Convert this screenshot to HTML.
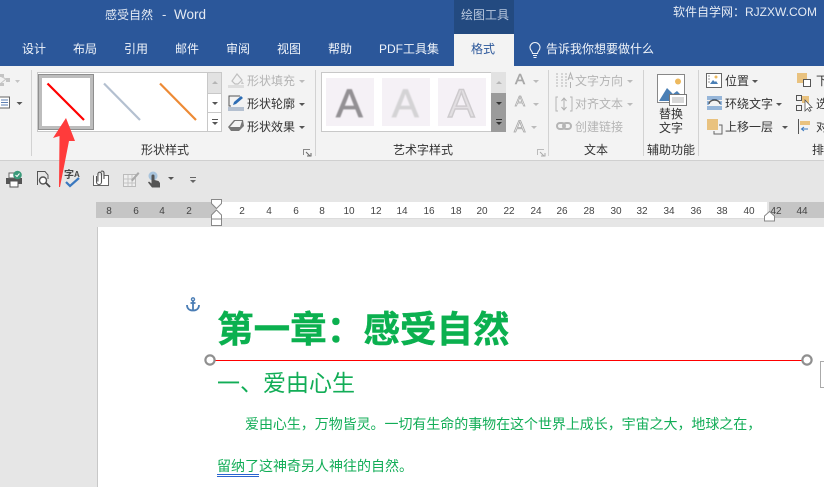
<!DOCTYPE html>
<html><head><meta charset="utf-8">
<style>
html,body{margin:0;padding:0;}
body{width:824px;height:487px;overflow:hidden;position:relative;background:#e6e6e6;font-family:"Liberation Sans","Noto Sans CJK SC",sans-serif;}
.t{position:absolute;white-space:nowrap;line-height:1;}
.r{position:absolute;}
.tab{color:#f0f4fa;font-size:12px;top:43px;}
.lb{color:#333;font-size:12px;}
.dis{color:#b4b4b4;font-size:12px;}
.rul{position:absolute;top:207px;font-size:10px;color:#444;line-height:1;width:20px;text-align:center;font-family:"Liberation Sans",sans-serif;}
.sep{position:absolute;top:70px;width:1px;height:86px;background:#d2d2d2;}
.ar{position:absolute;width:0;height:0;border-left:3px solid transparent;border-right:3px solid transparent;border-top:3px solid #555;}
svg{position:absolute;overflow:visible;}
</style></head><body>

<!-- title bar -->
<div class="r" style="left:0;top:0;width:824px;height:66px;background:#2b579a"></div>
<div class="r" style="left:454px;top:0;width:60px;height:34px;background:#234a80"></div>
<div class="r" style="left:454px;top:34px;width:60px;height:32px;background:#f3f3f3"></div>
<div class="t" style="left:105px;top:9px;font-size:12px;color:#e4eaf3">感受自然</div>
<div class="t" style="left:162px;top:8px;font-size:13px;color:#e4eaf3">-</div>
<div class="t" style="left:174px;top:8px;font-size:13.5px;color:#e4eaf3">Word</div>
<div class="t" style="left:461px;top:9px;font-size:12px;color:#b9c8de">绘图工具</div>
<div class="t" style="left:673px;top:6px;font-size:12px;color:#e4eaf3">软件自学网：RJZXW.COM</div>

<div class="t tab" style="left:22px">设计</div>
<div class="t tab" style="left:73px">布局</div>
<div class="t tab" style="left:124px">引用</div>
<div class="t tab" style="left:175px">邮件</div>
<div class="t tab" style="left:226px">审阅</div>
<div class="t tab" style="left:277px">视图</div>
<div class="t tab" style="left:328px">帮助</div>
<div class="t tab" style="left:379px">PDF工具集</div>
<div class="t tab" style="left:471px;color:#2b579a">格式</div>
<svg style="left:528px;top:42px" width="14" height="17" viewBox="0 0 14 17"><path d="M4.500 11.500C4.500 9 2 8.500 2 5.500a5 5 0 0 1 10 0C12 8.500 9.500 9 9.500 11.500ZM5 13.500h4M5.500 15.500h3" fill="none" stroke="#eef2f8" stroke-width="1.100"/></svg>
<div class="t tab" style="left:546px">告诉我你想要做什么</div>

<!-- ribbon -->
<div class="r" style="left:0;top:66px;width:824px;height:94px;background:#f3f3f3"></div>
<div class="r" style="left:0;top:160px;width:824px;height:1px;background:#d0d0d0"></div>
<div class="sep" style="left:31px"></div>
<div class="sep" style="left:315px"></div>
<div class="sep" style="left:548px"></div>
<div class="sep" style="left:643px"></div>
<div class="sep" style="left:698px"></div>

<!-- left cut icons -->
<svg style="left:0;top:72px" width="24" height="44" viewBox="0 0 24 44"><path d="M0 2h4v3H0zM6 6h4v4H6zM0 11h4v3H0z" fill="#c4c4c4"/><path d="M0 4L6 7L0 12" stroke="#c4c4c4" fill="none"/><path d="M15 8h5l-2.500 3z" fill="#c4c4c4"/><path d="M0 25h9.500v11H0" fill="#fff" stroke="#666"/><path d="M1 28h7M1 30.500h7M1 33h7" stroke="#2b579a" stroke-width=".8"/><path d="M16.500 30h6l-3 3z" fill="#555"/></svg>

<!-- shape styles gallery -->
<div class="r" style="left:37px;top:72px;width:185px;height:60px;background:#fff;border:1px solid #c8c8c8;box-sizing:border-box"></div>
<div class="r" style="left:38px;top:74px;width:56px;height:56px;border:4px solid #bdbdbd;outline:1px solid #8f8f8f;outline-offset:-1px;box-sizing:border-box;background:#fff"></div>
<svg style="left:38px;top:74px" width="190" height="56" viewBox="0 0 190 56"><line x1="9.500" y1="9.500" x2="46" y2="46" stroke="#f00" stroke-width="2.200"/><line x1="66" y1="9.500" x2="102" y2="46" stroke="#b4c0d0" stroke-width="2.200"/><line x1="122" y1="9.500" x2="158" y2="46" stroke="#ed8a35" stroke-width="2.200"/></svg>
<div class="r" style="left:207px;top:72px;width:15px;height:60px;background:#f3f3f3;border:1px solid #c8c8c8;box-sizing:border-box"></div>
<div class="r" style="left:208px;top:73px;width:13px;height:20px;background:#e2e2e2"></div>
<div class="r" style="left:208px;top:93px;width:13px;height:20px;background:#fff;border-bottom:1px solid #c8c8c8;border-top:1px solid #c8c8c8;box-sizing:border-box"></div>
<div class="r" style="left:208px;top:113px;width:13px;height:18px;background:#fff"></div>
<div class="ar" style="left:212px;top:81px;border-top:0;border-bottom:3px solid #b5b5b5"></div>
<div class="ar" style="left:212px;top:102px"></div>
<div class="r" style="left:212px;top:119px;width:6px;height:1px;background:#555"></div>
<div class="ar" style="left:212px;top:122px"></div>

<!-- shape fill etc -->
<svg style="left:228px;top:72px" width="20" height="18" viewBox="0 0 20 18"><path d="M4 9l5-7 5 6-4 4H7z" fill="none" stroke="#c0c0c0" stroke-width="1.200"/><path d="M14 9l2 3h-3z" fill="#c8c8c8"/><rect x="0" y="13" width="16" height="3" fill="#dedede"/></svg>
<div class="t dis" style="left:247px;top:75px">形状填充</div><div class="ar" style="left:299px;top:80px;border-top-color:#bbb"></div>
<svg style="left:228px;top:95px" width="18" height="16" viewBox="0 0 18 16"><path d="M12 1H1v10h2" fill="none" stroke="#555"/><path d="M5 10l1-3 7-6 2 2-7 6z" fill="#2e6db4"/><rect y="12" width="16" height="4" fill="#b4c0d0"/></svg>
<div class="t lb" style="left:247px;top:98px">形状轮廓</div><div class="ar" style="left:299px;top:103px"></div>
<svg style="left:228px;top:120px" width="18" height="12" viewBox="0 0 18 12"><path d="M0 7L6 0h9l1 6-5 5H3z" fill="#777"/><path d="M2 7l5-6h7l-2 6H7z" fill="#f4f4f4"/></svg>
<div class="t lb" style="left:247px;top:121px">形状效果</div><div class="ar" style="left:299px;top:126px"></div>
<div class="t lb" style="left:141px;top:144px">形状样式</div>
<svg style="left:303px;top:149px" width="9" height="8" viewBox="0 0 9 8"><path d="M.5 6V.5H7" fill="none" stroke="#888"/><path d="M3 3l4 4M4 7h4V4" fill="none" stroke="#666"/></svg>

<!-- wordart gallery -->
<div class="r" style="left:321px;top:72px;width:171px;height:60px;background:#fff;border:1px solid #c8c8c8;box-sizing:border-box"></div>
<div class="r" style="left:326px;top:78px;width:48px;height:48px;background:#f5f1f6"></div>
<div class="r" style="left:382px;top:78px;width:48px;height:48px;background:#f5f1f6"></div>
<div class="r" style="left:438px;top:78px;width:48px;height:48px;background:#f5f1f6"></div>
<div class="t" style="left:336px;top:84px;font-size:40px;color:#939094;-webkit-text-stroke:.8px #939094;filter:blur(.6px)">A</div>
<div class="t" style="left:392px;top:84px;font-size:40px;color:#d4d3d5;-webkit-text-stroke:.8px #d4d3d5;filter:blur(.6px)">A</div>
<div class="t" style="left:448px;top:84px;font-size:40px;color:#e2dfe2;-webkit-text-stroke:1.400px #cdcacd;filter:blur(.3px)">A</div>
<div class="r" style="left:491px;top:72px;width:15px;height:21px;background:#e2e2e2"></div>
<div class="r" style="left:491px;top:93px;width:15px;height:39px;background:#9b9b9b"></div>
<div class="ar" style="left:496px;top:81px;border-top:0;border-bottom:3px solid #b5b5b5"></div>
<div class="ar" style="left:496px;top:102px;border-top-color:#333"></div>
<div class="r" style="left:496px;top:119px;width:6px;height:1px;background:#333"></div>
<div class="ar" style="left:496px;top:122px;border-top-color:#333"></div>
<div class="t" style="left:515px;top:72px;font-size:15px;color:#a8a8a8;-webkit-text-stroke:.5px #a8a8a8">A</div><div class="ar" style="left:533px;top:80px;border-top-color:#bbb"></div>
<div class="t" style="left:515px;top:94px;font-size:15px;color:#f3f3f3;-webkit-text-stroke:.7px #a8a8a8">A</div><div class="ar" style="left:533px;top:103px;border-top-color:#bbb"></div>
<div class="t" style="left:514px;top:118px;font-size:17px;color:#efefef;-webkit-text-stroke:.8px #a8a8a8">A</div><div class="ar" style="left:531px;top:126px;border-top-color:#bbb"></div>
<div class="t lb" style="left:393px;top:144px">艺术字样式</div>
<svg style="left:537px;top:149px" width="9" height="8" viewBox="0 0 9 8"><path d="M.5 6V.5H7" fill="none" stroke="#bbb"/><path d="M3 3l4 4M4 7h4V4" fill="none" stroke="#aaa"/></svg>

<!-- text group -->
<svg style="left:555px;top:72px" width="20" height="18" viewBox="0 0 20 18"><path d="M2 1v15M7 1v15M11 1v15" stroke="#b5b5b5" stroke-dasharray="2 1"/><path d="M13 8l2.500-7 2.500 7M14 6h3M15.500 10v6" stroke="#b0b0b0" fill="none"/></svg>
<div class="t dis" style="left:575px;top:75px">文字方向</div><div class="ar" style="left:627px;top:80px;border-top-color:#bbb"></div>
<svg style="left:555px;top:96px" width="18" height="16" viewBox="0 0 18 16"><path d="M3 1H1v14h2M15 1h2v14h-2" fill="none" stroke="#b5b5b5"/><path d="M9 2v12M6.500 5L9 2l2.500 3M6.500 11L9 14l2.500-3" fill="none" stroke="#b0b0b0"/></svg>
<div class="t dis" style="left:575px;top:98px">对齐文本</div><div class="ar" style="left:627px;top:103px;border-top-color:#bbb"></div>
<svg style="left:556px;top:120px" width="16" height="12" viewBox="0 0 16 12"><rect x="1" y="3" width="8" height="6" rx="3" fill="none" stroke="#b5b5b5" stroke-width="2"/><rect x="7" y="3" width="8" height="6" rx="3" fill="none" stroke="#b5b5b5" stroke-width="2"/></svg>
<div class="t dis" style="left:575px;top:121px">创建链接</div>
<div class="t lb" style="left:584px;top:144px">文本</div>

<!-- alt text -->
<svg style="left:657px;top:74px" width="44" height="33" viewBox="0 0 44 33"><rect x=".5" y=".5" width="27" height="28" fill="#fff" stroke="#888"/><circle cx="21" cy="7.500" r="3" fill="#edb95e"/><path d="M2 27L10 14l6 6 4-3 6 6v4z" fill="#4a7fb5"/><rect x="12.500" y="20.500" width="17" height="11" fill="#fff" stroke="#777"/><path d="M15 24h12M15 26h12M15 28h12" stroke="#999" stroke-width=".8"/></svg>
<div class="t lb" style="left:659px;top:108px">替换</div>
<div class="t lb" style="left:659px;top:122px">文字</div>
<div class="t lb" style="left:647px;top:144px">辅助功能</div>

<!-- arrange -->
<svg style="left:706px;top:72px" width="17" height="17" viewBox="0 0 17 17"><rect x=".5" y="1.500" width="15" height="14" fill="#fff" stroke="#666"/><circle cx="10" cy="5" r="1.500" fill="#edb95e"/><path d="M4 12l3-4 2 2 1-1 2 3z" fill="#4a7fb5"/><path d="M2 4h2M2 7h2M2 10h2" stroke="#999"/></svg>
<div class="t lb" style="left:725px;top:75px">位置</div><div class="ar" style="left:752px;top:80px"></div>
<svg style="left:707px;top:96px" width="16" height="14" viewBox="0 0 16 14"><path d="M0 1h15M0 3h15M0 11h15M0 13h15" stroke="#3a78bf"/><path d="M2 8a5.500 4 0 0 1 11 0" stroke="#555" stroke-width="1.500" fill="none"/><path d="M0 6h2M13 6h2M0 8h2M13 8h2" stroke="#3a78bf"/></svg>
<div class="t lb" style="left:725px;top:98px">环绕文字</div><div class="ar" style="left:776px;top:103px"></div>
<svg style="left:707px;top:119px" width="16" height="16" viewBox="0 0 16 16"><rect width="11" height="11" fill="#e9c27f"/><path d="M12 6h3v9H7v-3" fill="none" stroke="#666"/></svg>
<div class="t lb" style="left:725px;top:121px">上移一层</div><div class="ar" style="left:782px;top:126px"></div>
<svg style="left:797px;top:73px" width="16" height="16" viewBox="0 0 16 16"><rect width="10" height="10" fill="#e9c27f"/><rect x="6.500" y="6.500" width="7" height="7" fill="#fff" stroke="#555"/></svg>
<div class="t lb" style="left:816px;top:75px">下</div>
<svg style="left:796px;top:95px" width="18" height="18" viewBox="0 0 18 18"><rect x=".5" y=".5" width="5" height="5" fill="none" stroke="#555"/><rect x=".5" y="10.500" width="5" height="5" fill="none" stroke="#555"/><rect x="6" y="1" width="7" height="7" fill="#e9c27f"/><path d="M9 5v11l2.500-2.500 2 3 1.500-1-2-3h3z" fill="#fff" stroke="#555" stroke-width=".8"/></svg>
<div class="t lb" style="left:816px;top:98px">选</div>
<svg style="left:798px;top:119px" width="14" height="15" viewBox="0 0 14 15"><path d="M.5 0v15" stroke="#555"/><rect x="2" y="2" width="10" height="4" fill="#e9c27f"/><path d="M10 10H4M6 8l-2.500 2L6 12" stroke="#3a78bf" fill="none"/></svg>
<div class="t lb" style="left:816px;top:121px">对</div>
<div class="t lb" style="left:812px;top:144px">排</div>

<!-- QAT icons -->
<svg style="left:5px;top:170px" width="18" height="18" viewBox="0 0 18 18"><path d="M1 8h16v6H1z" fill="#555"/><rect x="4" y="3" width="8" height="5" fill="#fff" stroke="#666"/><rect x="5" y="11" width="8" height="6" fill="#fff" stroke="#555"/><circle cx="12.500" cy="5" r="4.300" fill="#3a9a7a"/><path d="M10.500 5l1.500 1.500 2.500-3" stroke="#fff" fill="none"/></svg>
<svg style="left:36px;top:170px" width="17" height="18" viewBox="0 0 17 18"><path d="M1.500 15V1.500H9L12 5v4" fill="none" stroke="#555"/><circle cx="7" cy="10.500" r="3.500" fill="#fff" stroke="#555" stroke-width="1.400"/><path d="M10 13l4 4" stroke="#444" stroke-width="1.800"/></svg>
<div class="t" style="left:64px;top:171px;font-size:10px;color:#444;font-weight:bold">字</div>
<div class="t" style="left:74px;top:171px;font-size:8px;color:#444;font-weight:bold">A</div>
<svg style="left:65px;top:177px" width="16" height="11" viewBox="0 0 16 11"><path d="M1 5l4 4 9-8" fill="none" stroke="#3a78bf" stroke-width="2.200"/></svg>
<svg style="left:93px;top:170px" width="17" height="17" viewBox="0 0 17 17"><path d="M.5 5.500v10h15v-10h-4" fill="#fff" stroke="#666"/><path d="M3.500 6v6a2.500 2.500 0 0 0 5 0V4a1.800 1.800 0 0 0-3.600 0v7.500" fill="none" stroke="#555" stroke-width="1.100"/><path d="M8 1.500a1.800 1.800 0 0 1 3 1.500v6" fill="none" stroke="#555" stroke-width="1.100"/></svg>
<svg style="left:123px;top:171px" width="17" height="16" viewBox="0 0 17 16"><rect x=".5" y="3.500" width="12" height="12" fill="#eee" stroke="#bbb"/><path d="M1 8h11M1 12h11M5 4v11M9 4v11" stroke="#c4c4c4"/><path d="M8 9l7-8 1.500 1.500-7 8z" fill="#aaa"/></svg>
<svg style="left:148px;top:171px" width="14" height="17" viewBox="0 0 14 17"><circle cx="5" cy="5" r="4.500" fill="#a8c4dd"/><path d="M3.500 5a1.500 1.500 0 0 1 3 0v4l4 1 1.500 2v4.500H4l-4-5 1-1 2.500 2z" fill="#555"/></svg>
<div class="ar" style="left:168px;top:177px;border-top-color:#555"></div>
<div class="r" style="left:190px;top:177px;width:6px;height:1px;background:#666"></div>
<div class="ar" style="left:190px;top:180px;border-top-color:#666"></div>

<!-- ruler -->
<div class="r" style="left:96px;top:202px;width:120px;height:16px;background:#c5c5c5"></div>
<div class="r" style="left:216px;top:202px;width:551px;height:16px;background:#fff"></div>
<div class="r" style="left:769px;top:202px;width:55px;height:16px;background:#c5c5c5"></div>
<div class="r" style="left:216px;top:218px;width:551px;height:1px;background:#dcdcdc"></div>
<div class="rul" style="left:99px">8</div><div class="rul" style="left:126px">6</div><div class="rul" style="left:152px">4</div><div class="rul" style="left:179px">2</div>
<div class="rul" style="left:232px">2</div><div class="rul" style="left:259px">4</div><div class="rul" style="left:286px">6</div><div class="rul" style="left:312px">8</div>
<div class="rul" style="left:339px">10</div><div class="rul" style="left:366px">12</div><div class="rul" style="left:392px">14</div><div class="rul" style="left:419px">16</div>
<div class="rul" style="left:446px">18</div><div class="rul" style="left:472px">20</div><div class="rul" style="left:499px">22</div><div class="rul" style="left:526px">24</div>
<div class="rul" style="left:552px">26</div><div class="rul" style="left:579px">28</div><div class="rul" style="left:606px">30</div><div class="rul" style="left:632px">32</div>
<div class="rul" style="left:659px">34</div><div class="rul" style="left:686px">36</div><div class="rul" style="left:712px">38</div><div class="rul" style="left:739px">40</div>
<div class="rul" style="left:766px">42</div><div class="rul" style="left:792px">44</div>
<svg style="left:211px;top:199px" width="12" height="28" viewBox="0 0 12 28"><path d="M.5.500h10v4l-5 5-5-5z" fill="#fff" stroke="#888"/><path d="M5.500 11l5 5v4h-10v-4z" fill="#fff" stroke="#888"/><rect x=".5" y="20" width="10" height="6.500" fill="#fff" stroke="#888"/></svg>
<svg style="left:764px;top:211px" width="11" height="11" viewBox="0 0 11 11"><path d="M5.500.500l5 4.500v5H.5V5z" fill="#fff" stroke="#888"/></svg>

<!-- page -->
<div class="r" style="left:97px;top:227px;width:727px;height:260px;background:#fff;border-left:1px solid #c8c8c8;box-sizing:border-box"></div>

<svg style="left:186px;top:297px" width="14" height="15" viewBox="0 0 14 15"><circle cx="7" cy="2.300" r="1.500" fill="none" stroke="#4a7db5" stroke-width="1.400"/><path d="M7 4v10M4.500 6h5" stroke="#4a7db5" stroke-width="1.800" fill="none"/><path d="M1 8c0 4 3 5.500 6 5.500S13 12 13 8" fill="none" stroke="#4a7db5" stroke-width="1.800"/></svg>

<div class="t" style="left:217px;top:312px;font-size:36.6px;font-weight:bold;color:#0bb04f;-webkit-text-stroke:.4px #0bb04f">第一章：感受自然</div>
<div class="r" style="left:210px;top:360px;width:597px;height:1px;background:#f00"></div>
<svg style="left:203px;top:353px" width="14" height="14"><circle cx="7" cy="7" r="4.600" fill="#fff" stroke="#8f8f8f" stroke-width="2.200"/></svg>
<svg style="left:800px;top:353px" width="14" height="14"><circle cx="7" cy="7" r="4.600" fill="#fff" stroke="#8f8f8f" stroke-width="2.200"/></svg>
<div class="r" style="left:820px;top:361px;width:6px;height:27px;border:1px solid #aaa;box-sizing:border-box;background:#fff"></div>

<div class="t" style="left:217px;top:372px;font-size:23px;color:#12ad57">一、爱由心生</div>
<div class="t" style="left:245px;top:417px;font-size:14px;color:#12ad57;letter-spacing:-.05px">爱由心生，万物皆灵。一切有生命的事物在这个世界上成长，宇宙之大，地球之在，</div>
<div class="t" style="left:217px;top:459px;font-size:14px;color:#12ad57">留纳了这神奇另人神往的自然。</div>
<div class="r" style="left:217px;top:474px;width:42px;height:1px;background:#2a64d0"></div>
<div class="r" style="left:217px;top:476px;width:42px;height:1px;background:#2a64d0"></div>

<!-- red arrow -->
<svg style="left:0;top:0" width="824" height="487" viewBox="0 0 824 487"><path d="M66 118L53 138L59.500 136L59 187L60 187L69 141L75 141Z" fill="#ff3b3b"/></svg>

</body></html>
